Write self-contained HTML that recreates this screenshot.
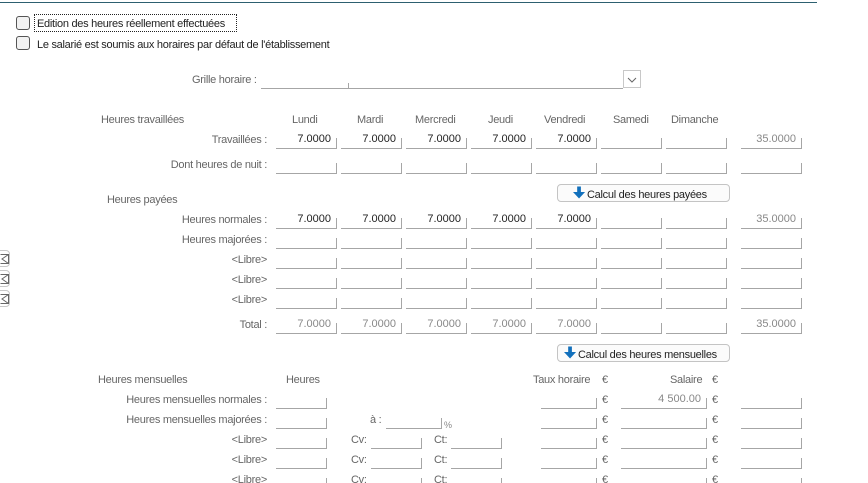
<!DOCTYPE html>
<html><head><meta charset="utf-8"><style>
html,body{margin:0;padding:0;background:#fff}
#p{position:relative;width:868px;height:483px;overflow:hidden;font:11px/16px "Liberation Sans",sans-serif;letter-spacing:-.28px;color:#666}
#p div,#p span{position:absolute;white-space:nowrap}
.t{color:#222}
.r{text-align:right}
.f{box-sizing:border-box;height:11px;border-right:1px solid #a6a6a6;border-bottom:1px solid #a6a6a6;line-height:3px;letter-spacing:0;text-align:right;padding-right:5px}
.w{width:61px}
.k{color:#222}
.cb{width:12px;height:12px;left:16px;border:1px solid #555;border-radius:3px;background:#f2f2f2}
.b{box-sizing:border-box;left:557px;width:173px;height:18px;border:1px solid #c4c4c4;border-radius:4px;background:#fbfbfb}
.m{box-sizing:border-box;left:-8px;width:18px;height:17px;border:1px solid #c8c8c8;border-radius:4px;background:#fff}
</style></head><body><div id="p">
<div style="left:0;top:2px;width:817px;height:1px;background:#2d6070"></div>

<div class="cb" style="top:16px"></div>
<div style="left:34px;top:14px;width:201px;height:16px;border:1px dotted #222"></div>
<div class="t" style="left:37px;top:16px">Edition des heures réellement effectuées</div>
<div class="cb" style="top:36px"></div>
<div class="t" style="left:37px;top:37px">Le salarié est soumis aux horaires par défaut de l'établissement</div>

<div style="left:192px;top:72px">Grille horaire :</div>
<div style="left:261px;top:88px;width:362px;height:1px;background:#a6a6a6"></div>
<div style="left:348px;top:83px;width:1px;height:5px;background:#a6a6a6"></div>
<div style="left:623px;top:70px;width:16px;height:16px;border:1px solid #c8c8c8;background:#fff">
<svg width="16" height="16" style="position:absolute;left:0;top:0"><path d="M4 7L8 11L12 7" fill="none" stroke="#666" stroke-width="1"/></svg></div>

<div style="left:101px;top:112px">Heures travaillées</div>
<div style="left:292px;top:112px">Lundi</div>
<div style="left:357px;top:112px">Mardi</div>
<div style="left:415px;top:112px">Mercredi</div>
<div style="left:488px;top:112px">Jeudi</div>
<div style="left:544px;top:112px">Vendredi</div>
<div style="left:613px;top:112px">Samedi</div>
<div style="left:671px;top:112px">Dimanche</div>

<div class="r" style="right:601px;top:132px">Travaillées :</div>
<div class="f w k" style="left:276px;top:138px">7.0000</div>
<div class="f w k" style="left:341px;top:138px">7.0000</div>
<div class="f w k" style="left:406px;top:138px">7.0000</div>
<div class="f w k" style="left:471px;top:138px">7.0000</div>
<div class="f w k" style="left:536px;top:138px">7.0000</div>
<div class="f w" style="left:601px;top:138px"></div>
<div class="f w" style="left:666px;top:138px"></div>
<div class="f w" style="left:741px;top:138px;color:#888">35.0000</div>

<div class="r" style="right:601px;top:157px">Dont heures de nuit :</div>
<div class="f w" style="left:276px;top:163px"></div>
<div class="f w" style="left:341px;top:163px"></div>
<div class="f w" style="left:406px;top:163px"></div>
<div class="f w" style="left:471px;top:163px"></div>
<div class="f w" style="left:536px;top:163px"></div>
<div class="f w" style="left:601px;top:163px"></div>
<div class="f w" style="left:666px;top:163px"></div>
<div class="f w" style="left:741px;top:163px"></div>

<div style="left:107px;top:192px">Heures payées</div>
<div class="b" style="top:184px"></div>
<svg width="13" height="13" viewBox="0 0 14 14" style="position:absolute;left:573px;top:186px"><path d="M4.500 0.500H8.500V6.500H13L6.500 13.500L0 6.500H4.500Z" fill="#1270bc"/></svg>
<div class="t" style="left:587px;top:187px">Calcul des heures payées</div>

<div class="r" style="right:601px;top:212px">Heures normales :</div>
<div class="f w k" style="left:276px;top:218px">7.0000</div>
<div class="f w k" style="left:341px;top:218px">7.0000</div>
<div class="f w k" style="left:406px;top:218px">7.0000</div>
<div class="f w k" style="left:471px;top:218px">7.0000</div>
<div class="f w k" style="left:536px;top:218px">7.0000</div>
<div class="f w" style="left:601px;top:218px"></div>
<div class="f w" style="left:666px;top:218px"></div>
<div class="f w" style="left:741px;top:218px;color:#888">35.0000</div>

<div class="r" style="right:601px;top:232px">Heures majorées :</div>
<div class="f w" style="left:276px;top:238px"></div>
<div class="f w" style="left:341px;top:238px"></div>
<div class="f w" style="left:406px;top:238px"></div>
<div class="f w" style="left:471px;top:238px"></div>
<div class="f w" style="left:536px;top:238px"></div>
<div class="f w" style="left:601px;top:238px"></div>
<div class="f w" style="left:666px;top:238px"></div>
<div class="f w" style="left:741px;top:238px"></div>

<div class="r" style="right:601px;top:252px">&lt;Libre&gt;</div>
<div class="f w" style="left:276px;top:258px"></div>
<div class="f w" style="left:341px;top:258px"></div>
<div class="f w" style="left:406px;top:258px"></div>
<div class="f w" style="left:471px;top:258px"></div>
<div class="f w" style="left:536px;top:258px"></div>
<div class="f w" style="left:601px;top:258px"></div>
<div class="f w" style="left:666px;top:258px"></div>
<div class="f w" style="left:741px;top:258px"></div>

<div class="r" style="right:601px;top:272px">&lt;Libre&gt;</div>
<div class="f w" style="left:276px;top:278px"></div>
<div class="f w" style="left:341px;top:278px"></div>
<div class="f w" style="left:406px;top:278px"></div>
<div class="f w" style="left:471px;top:278px"></div>
<div class="f w" style="left:536px;top:278px"></div>
<div class="f w" style="left:601px;top:278px"></div>
<div class="f w" style="left:666px;top:278px"></div>
<div class="f w" style="left:741px;top:278px"></div>

<div class="r" style="right:601px;top:292px">&lt;Libre&gt;</div>
<div class="f w" style="left:276px;top:298px"></div>
<div class="f w" style="left:341px;top:298px"></div>
<div class="f w" style="left:406px;top:298px"></div>
<div class="f w" style="left:471px;top:298px"></div>
<div class="f w" style="left:536px;top:298px"></div>
<div class="f w" style="left:601px;top:298px"></div>
<div class="f w" style="left:666px;top:298px"></div>
<div class="f w" style="left:741px;top:298px"></div>

<div class="r" style="right:601px;top:317px">Total :</div>
<div class="f w" style="left:276px;top:323px;color:#888">7.0000</div>
<div class="f w" style="left:341px;top:323px;color:#888">7.0000</div>
<div class="f w" style="left:406px;top:323px;color:#888">7.0000</div>
<div class="f w" style="left:471px;top:323px;color:#888">7.0000</div>
<div class="f w" style="left:536px;top:323px;color:#888">7.0000</div>
<div class="f w" style="left:601px;top:323px"></div>
<div class="f w" style="left:666px;top:323px"></div>
<div class="f w" style="left:741px;top:323px;color:#888">35.0000</div>

<div class="m" style="top:250px"><svg width="10" height="11" style="position:absolute;left:7px;top:2px"><path d="M0.500 1.500H8.500V10.500H0.500M8.500 1.500L2 6L8.500 10.500" fill="none" stroke="#666"/></svg></div>
<div class="m" style="top:270px"><svg width="10" height="11" style="position:absolute;left:7px;top:2px"><path d="M0.500 1.500H8.500V10.500H0.500M8.500 1.500L2 6L8.500 10.500" fill="none" stroke="#666"/></svg></div>
<div class="m" style="top:290px"><svg width="10" height="11" style="position:absolute;left:7px;top:2px"><path d="M0.500 1.500H8.500V10.500H0.500M8.500 1.500L2 6L8.500 10.500" fill="none" stroke="#666"/></svg></div>

<div class="b" style="top:344px"></div>
<svg width="13" height="13" viewBox="0 0 14 14" style="position:absolute;left:564px;top:346px"><path d="M4.500 0.500H8.500V6.500H13L6.500 13.500L0 6.500H4.500Z" fill="#1270bc"/></svg>
<div class="t" style="left:578px;top:347px">Calcul des heures mensuelles</div>

<div style="left:98px;top:372px">Heures mensuelles</div>
<div style="left:286px;top:372px">Heures</div>
<div style="left:533px;top:372px">Taux horaire</div>
<div style="left:602px;top:372px">€</div>
<div style="left:670px;top:372px">Salaire</div>
<div style="left:712px;top:372px">€</div>

<div class="r" style="right:601px;top:392px">Heures mensuelles normales :</div>
<div class="f" style="left:276px;top:398px;width:51px"></div>
<div class="f" style="left:541px;top:398px;width:56px"></div>
<div style="left:602px;top:392px">€</div>
<div class="f" style="left:621px;top:398px;width:86px;color:#888">4 500.00</div>
<div style="left:712px;top:392px">€</div>
<div class="f w" style="left:741px;top:398px"></div>

<div class="r" style="right:601px;top:412px">Heures mensuelles majorées :</div>
<div class="f" style="left:276px;top:418px;width:51px"></div>
<div style="left:370px;top:412px">à :</div>
<div class="f" style="left:386px;top:418px;width:56px"></div>
<div style="left:444px;top:417px;font-size:9px;color:#888">%</div>
<div class="f" style="left:541px;top:418px;width:56px"></div>
<div style="left:602px;top:412px">€</div>
<div class="f" style="left:621px;top:418px;width:86px"></div>
<div style="left:712px;top:412px">€</div>
<div class="f w" style="left:741px;top:418px"></div>

<div class="r" style="right:601px;top:432px">&lt;Libre&gt;</div>
<div class="f" style="left:276px;top:438px;width:51px"></div>
<div style="left:351px;top:432px">Cv:</div>
<div class="f" style="left:371px;top:438px;width:51px"></div>
<div style="left:434px;top:432px">Ct:</div>
<div class="f" style="left:451px;top:438px;width:51px"></div>
<div class="f" style="left:541px;top:438px;width:56px"></div>
<div style="left:602px;top:432px">€</div>
<div class="f" style="left:621px;top:438px;width:86px"></div>
<div style="left:712px;top:432px">€</div>
<div class="f w" style="left:741px;top:438px"></div>

<div class="r" style="right:601px;top:452px">&lt;Libre&gt;</div>
<div class="f" style="left:276px;top:458px;width:51px"></div>
<div style="left:351px;top:452px">Cv:</div>
<div class="f" style="left:371px;top:458px;width:51px"></div>
<div style="left:434px;top:452px">Ct:</div>
<div class="f" style="left:451px;top:458px;width:51px"></div>
<div class="f" style="left:541px;top:458px;width:56px"></div>
<div style="left:602px;top:452px">€</div>
<div class="f" style="left:621px;top:458px;width:86px"></div>
<div style="left:712px;top:452px">€</div>
<div class="f w" style="left:741px;top:458px"></div>

<div class="r" style="right:601px;top:472px">&lt;Libre&gt;</div>
<div class="f" style="left:276px;top:478px;width:51px"></div>
<div style="left:351px;top:472px">Cv:</div>
<div class="f" style="left:371px;top:478px;width:51px"></div>
<div style="left:434px;top:472px">Ct:</div>
<div class="f" style="left:451px;top:478px;width:51px"></div>
<div class="f" style="left:541px;top:478px;width:56px"></div>
<div style="left:602px;top:472px">€</div>
<div class="f" style="left:621px;top:478px;width:86px"></div>
<div style="left:712px;top:472px">€</div>
<div class="f w" style="left:741px;top:478px"></div>
</div></body></html>
